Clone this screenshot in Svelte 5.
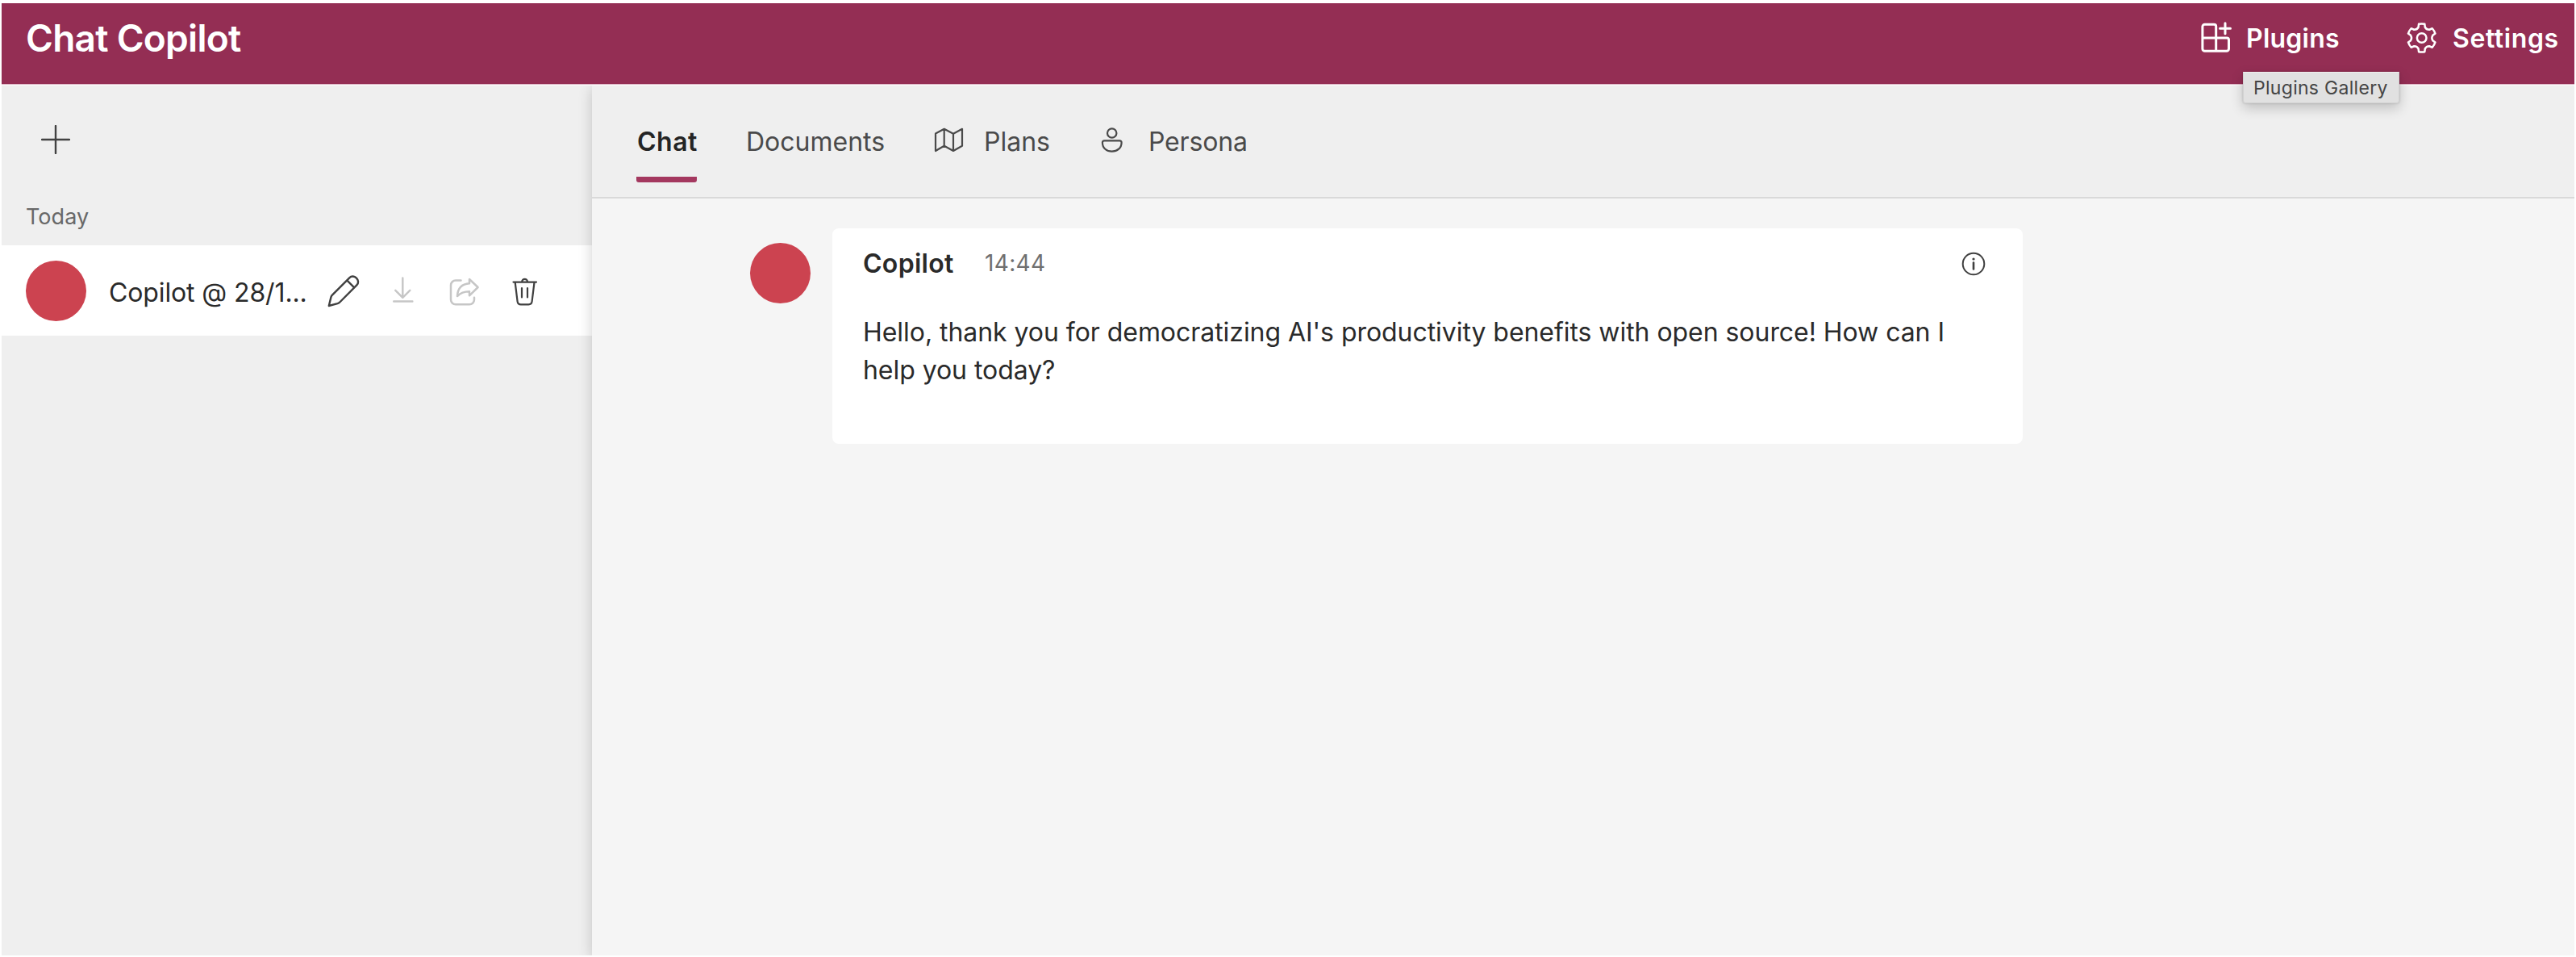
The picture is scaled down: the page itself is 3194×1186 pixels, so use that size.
<script>
  // Six-toothed cog outline, centred on (19.7, 20)
  const point = (deg, r) => {
    const a = (deg * Math.PI) / 180;
    return `${(19.7 + r * Math.cos(a)).toFixed(2)} ${(20 + r * Math.sin(a)).toFixed(2)}`;
  };
  const cog =
    'M' +
    [30, 90, 150, 210, 270, 330]
      .map((a) => `${point(a - 17, 14)} L${point(a - 12, 17.6)} Q${point(a, 18)} ${point(a + 12, 17.6)} L${point(a + 17, 14)} Q${point(a + 30, 11.6)} ${point(a + 43, 14)}`)
      .join(' L') +
    'Z';
</script>

<div class="app">
  <header>
    <h1>Chat Copilot</h1>
    <nav>
      <button class="plugins">
        <svg width="40" height="40" viewBox="0 0 40 40" stroke-width="3">
          <path d="M19.7 20V5.8a2.500 2.500 0 0 0-2.500-2.500H5.700a2.800 2.800 0 0 0-2.800 2.800v27.400a2.800 2.800 0 0 0 2.800 2.800h27a2.800 2.800 0 0 0 2.800-2.800V22.500a2.500 2.500 0 0 0-2.500-2.500H2.900M19.700 20v16.300M31 1.800v13M24.500 8.300h13" />
        </svg>
        <span>Plugins</span>
      </button>
      <button class="settings">
        <svg width="40" height="40" viewBox="0 0 40 40" stroke-width="2.5">
          <path d={cog} />
          <circle cx="19.7" cy="20" r="5.8" />
        </svg>
        <span>Settings</span>
      </button>
    </nav>
    <div class="tooltip">Plugins Gallery</div>
  </header>

  <div class="body">
    <aside>
      <button class="new" aria-label="New chat">
        <svg width="36" height="36" viewBox="0 0 36 36" stroke-width="2.4"><path d="M18 1v34M1 18h34" /></svg>
      </button>
      <p class="group">Today</p>
      <div class="row">
        <i class="avatar"></i>
        <span class="name">Copilot @ 28/1...</span>
        <div class="actions">
          <svg width="48" height="48" viewBox="0 0 48 48" stroke-width="2.4">
            <path d="M5.8 42l2.6-10.6q.5-1.8 1.8-3L31.2 7.3c2.6-2.6 6.3-2.2 8.8.3s2.9 6.2.3 8.8L19.3 37.5q-1.2 1.2-2.8 1.700zM28.2 10.3l9 9" />
          </svg>
          <svg class="off" width="48" height="48" viewBox="0 0 48 48" stroke-width="2.4">
            <path d="M22.3 7.500v24M13.300 22.800l9 9 9-9M11.200 36.500h23.200" />
          </svg>
          <svg class="off" width="48" height="48" viewBox="0 0 48 48" stroke-width="2.5">
            <path d="M19.500 10.500H13a6 6 0 0 0-6 6v17.800a6 6 0 0 0 6 6h17a6 6 0 0 0 6-6v-2.500M30 9v5.300c-9 .6-14.500 6-15 15.700 4-4 8.500-5.700 15-5.700v5L40.600 19z" />
          </svg>
          <svg width="48" height="48" viewBox="0 0 48 48" stroke-width="2.2">
            <path d="M9.500 12.600h28.500M20.200 12.300a3.400 3.400 0 0 1 6.800 0M11.700 13l2.900 23.600q.5 3.700 4.200 3.700h9.600q3.700 0 4.200-3.700L35.500 13M20 20v11.500M27 20v11.500" />
          </svg>
        </div>
      </div>
    </aside>

    <main>
      <div class="tabs">
        <button class="active">Chat</button>
        <button>Documents</button>
        <button>
          <svg width="40" height="40" viewBox="0 0 40 40" stroke-width="2.2">
            <path d="M3 12.500l10.700-5.700L25 12.700l11-5.900v21L25 34l-11.300-6.200L3 34zM13.700 6.800v21M25 12.700V34" />
          </svg>
          <span>Plans</span>
        </button>
        <button>
          <svg width="40" height="40" viewBox="0 0 40 40" stroke-width="2.2">
            <circle cx="17.7" cy="12" r="5.7" />
            <path d="M8.300 21.300h18.900q2.400 0 2.400 2.400C29.600 30.500 24.300 34.600 17.700 34.600S5.900 30.500 5.900 23.700q0-2.400 2.400-2.400z" />
          </svg>
          <span class="persona">Persona</span>
        </button>
      </div>

      <div class="message">
        <i class="avatar"></i>
        <article>
          <div class="meta">
            <b>Copilot</b>
            <time>14:44</time>
            <svg width="32" height="32" viewBox="0 0 32 32" stroke-width="2">
              <circle cx="16" cy="16" r="13.3" />
              <path d="M16 14.500v8" stroke-width="2.600" />
              <path d="M16 10h.01" stroke-width="3.200" />
            </svg>
          </div>
          <p>Hello, thank you for democratizing AI's productivity benefits with open source! How can I help you today?</p>
        </article>
      </div>
    </main>
  </div>
</div>

<style>
  :global(body) { background: #fff; }
  .app {
    box-sizing: border-box;
    height: 1186px;
    padding: 4px 2px 2px;
    display: flex;
    flex-direction: column;
    font: 32px/40px Inter, "Liberation Sans", sans-serif;
    color: #2a2a2a;
    overflow: hidden;
  }
  h1, p { margin: 0; }
  svg { display: block; flex: none; fill: none; stroke: currentColor; stroke-linecap: round; stroke-linejoin: round; }
  button { display: flex; padding: 0; border: 0; background: none; color: inherit; font: inherit; text-align: left; }

  header {
    position: relative;
    z-index: 2;
    flex: none;
    display: flex;
    justify-content: space-between;
    height: 100px;
    border-bottom: 1px solid #dcb5c4;
    box-shadow: 0 1px #fcfafb;
    margin-bottom: 1px;
    background: #942e54;
    color: #fff;
  }
  h1 { margin: 15px 0 0 30px; font-size: 46px; line-height: 56px; font-weight: 600; letter-spacing: -0.73px; }
  nav { display: flex; padding-top: 23px; font-weight: 600; }
  nav span { margin-top: 1px; }
  .plugins { width: 255px; height: 41px; gap: 17px; letter-spacing: 0.24px; }
  .settings { width: 209px; height: 41px; gap: 18px; letter-spacing: 0.6px; }
  .tooltip {
    position: absolute;
    left: 2779px;
    top: 85px;
    box-sizing: border-box;
    width: 194px;
    height: 39px;
    padding-left: 12px;
    border: 1px solid #d2d2d2;
    border-top-color: #efefef;
    border-radius: 0 0 3px 3px;
    background: #e1e1e1;
    box-shadow: 0 6px 16px rgba(0, 0, 0, 0.2), 0 0 3px rgba(0, 0, 0, 0.18);
    color: #454545;
    font-size: 23px;
    line-height: 38px;
    letter-spacing: 0.29px;
    white-space: nowrap;
  }

  .body { flex: 1; display: flex; min-height: 0; overflow: hidden; }
  aside { width: 732px; flex: none; background: #efefef; }
  .new { margin: 49px 0 0 49px; color: #424242; }
  .group { margin: 58px 0 0 30px; height: 55px; font-size: 27px; color: #686868; letter-spacing: 0.05px; }
  .row { display: flex; align-items: center; box-sizing: border-box; height: 112px; padding-left: 30px; background: #fff; }
  .avatar { flex: none; width: 75px; height: 75px; border-radius: 50%; background: #cc4350; }
  .name { width: 267px; margin: 6px 0 0 28px; letter-spacing: -0.12px; white-space: nowrap; }
  .actions { display: flex; gap: 27px; margin-top: 2px; color: #404040; }
  .off { color: #c6c6c6; }

  main { flex: 1; background: #f5f5f5; box-shadow: 0 4px 16px rgba(0, 0, 0, 0.19); }
  .tabs {
    display: grid;
    grid-template-columns: 136px 232px 204px 300px;
    align-items: start;
    box-sizing: border-box;
    height: 140px;
    padding: 50px 0 0 55px;
    border-bottom: 2px solid #d9d9d9;
    background: #efefef;
    color: #4a4a4a;
  }
  .tabs button { gap: 23px; white-space: nowrap; }
  .tabs svg { margin-top: -3px; }
  .persona { letter-spacing: -0.16px; }
  .tabs .active {
    box-sizing: border-box;
    width: 75px;
    height: 70px;
    padding-left: 1px;
    border-radius: 3px;
    background: linear-gradient(#a4385f, #a4385f) 0 100% / 100% 7px no-repeat;
    color: #242424;
    font-weight: 600;
    letter-spacing: 0.48px;
  }

  .message { display: flex; align-items: flex-start; padding: 37px 0 0 196px; }
  .message .avatar { margin-top: 18px; }
  article { box-sizing: border-box; width: 1476px; height: 267px; margin-left: 27px; padding: 24px 45px 0 38px; border-radius: 8px; background: #fff; }
  .meta { display: flex; height: 40px; align-items: flex-start; }
  b { width: 151px; font-weight: 600; letter-spacing: 0.29px; }
  time { font-size: 28px; line-height: 38px; letter-spacing: 0.34px; color: #707070; }
  .meta svg { margin: 4px 0 0 auto; color: #404040; }
  article p { margin-top: 42px; width: 1370px; line-height: 46.5px; letter-spacing: -0.05px; }
</style>
